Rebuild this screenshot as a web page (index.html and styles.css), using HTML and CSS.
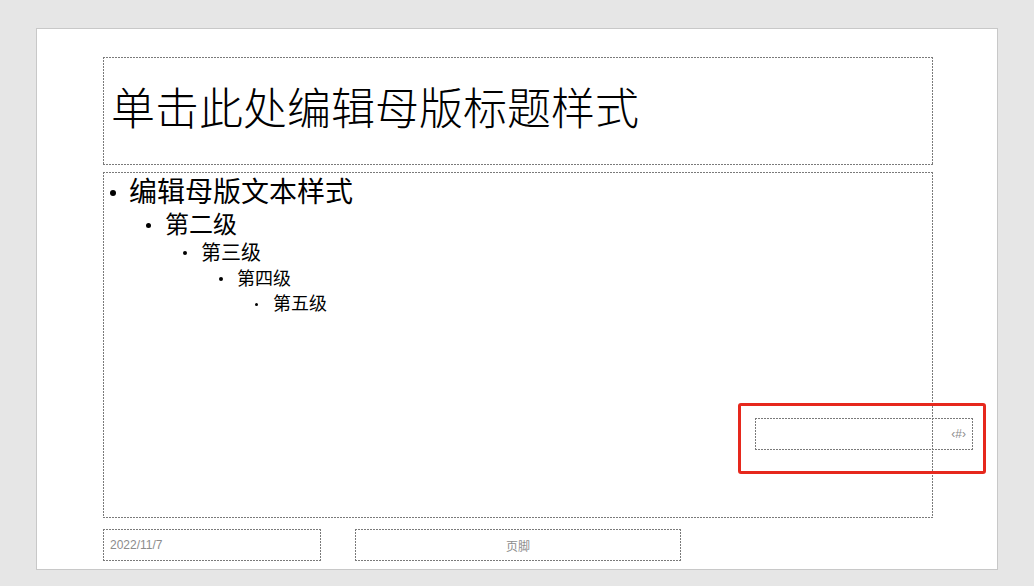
FILE: index.html
```html
<!DOCTYPE html>
<html lang="zh-CN">
<head>
<meta charset="utf-8">
<title>母版</title>
<link rel="stylesheet" href="styles.css">
</head>
<body>
<div class="stage">
  <div class="slide">
    <div class="ph title-ph">
      <h1 class="title">单击此处编辑母版标题样式</h1>
    </div>
    <div class="ph body-ph">
      <ul class="levels">
        <li class="lv lv1">编辑母版文本样式</li>
        <li class="lv lv2">第二级</li>
        <li class="lv lv3">第三级</li>
        <li class="lv lv4">第四级</li>
        <li class="lv lv5">第五级</li>
      </ul>
    </div>
    <div class="footer-row">
      <div class="ph date-ph">2022/11/7</div>
      <div class="ph foot-ph">页脚</div>
    </div>
    <div class="ph num-ph">‹#›</div>
    <div class="highlight"></div>
  </div>
</div>
</body>
</html>
```

FILE: styles.css
```css
* { box-sizing: border-box; }

html, body {
  margin: 0;
  padding: 0;
  background: #e6e6e6;
  font-family: "Liberation Sans", "Noto Sans CJK SC", sans-serif;
  color: #000;
}

.stage {
  padding: 28px 0 0 36px;
  height: 586px;
}

.slide {
  position: relative;
  width: 962px;
  height: 542px;
  background: #fff;
  border: 1px solid #c8c8c8;
  padding: 28px 0 0 66px;
}

.ph {
  background:
    repeating-linear-gradient(90deg, #7a7a7a 0 2px, transparent 2px 3px) top left / 100% 1px no-repeat,
    repeating-linear-gradient(90deg, #7a7a7a 0 2px, transparent 2px 3px) bottom left / 100% 1px no-repeat,
    repeating-linear-gradient(180deg, #7a7a7a 0 2px, transparent 2px 3px) top left / 1px 100% no-repeat,
    repeating-linear-gradient(180deg, #7a7a7a 0 2px, transparent 2px 3px) top right / 1px 100% no-repeat;
}

.title-ph {
  width: 830px;
  height: 108px;
  display: flex;
  align-items: center;
  padding: 0 0 3px 8px;
}

.title {
  margin: 0;
  font-size: 44px;
  font-weight: 300;
  line-height: 52px;
  white-space: nowrap;
}

.body-ph {
  width: 830px;
  height: 346px;
  margin-top: 7px;
  padding-top: 3px;
}

.levels {
  list-style: none;
  margin: 0;
  padding: 0;
}

.lv {
  display: flex;
  align-items: center;
  white-space: nowrap;
}

.lv::before {
  content: "";
  flex: none;
  border-radius: 50%;
  background: #000;
}

.lv1 { font-size: 28px; line-height: 35px; padding-left: 7px; }
.lv1::before { width: 6px; height: 6px; margin-right: 13px; }

.lv2 { font-size: 24px; line-height: 30px; padding-left: 43px; }
.lv2::before { width: 5px; height: 5px; margin-right: 14px; }

.lv3 { font-size: 20px; line-height: 26px; padding-left: 80px; }
.lv3::before { width: 4px; height: 4px; margin-right: 14px; }

.lv4 { font-size: 18px; line-height: 26px; padding-left: 116px; }
.lv4::before { width: 4px; height: 4px; margin-right: 14px; }

.lv5 { font-size: 18px; line-height: 25px; padding-left: 152px; }
.lv5::before { width: 3px; height: 3px; margin-right: 15px; }

.footer-row {
  display: flex;
  gap: 34px;
  margin-top: 11px;
}

.date-ph,
.foot-ph,
.num-ph {
  height: 32px;
  display: flex;
  align-items: center;
  font-size: 12px;
  color: #8c8c8c;
}

.date-ph {
  width: 218px;
  padding-left: 7px;
}

.foot-ph {
  width: 326px;
  justify-content: center;
}

.num-ph {
  position: absolute;
  left: 718px;
  top: 389px;
  width: 218px;
  justify-content: flex-end;
  padding-right: 7px;
}

.highlight {
  position: absolute;
  left: 701px;
  top: 374px;
  width: 248px;
  height: 71px;
  border: 3px solid #e6281d;
  border-radius: 3px;
}
```
